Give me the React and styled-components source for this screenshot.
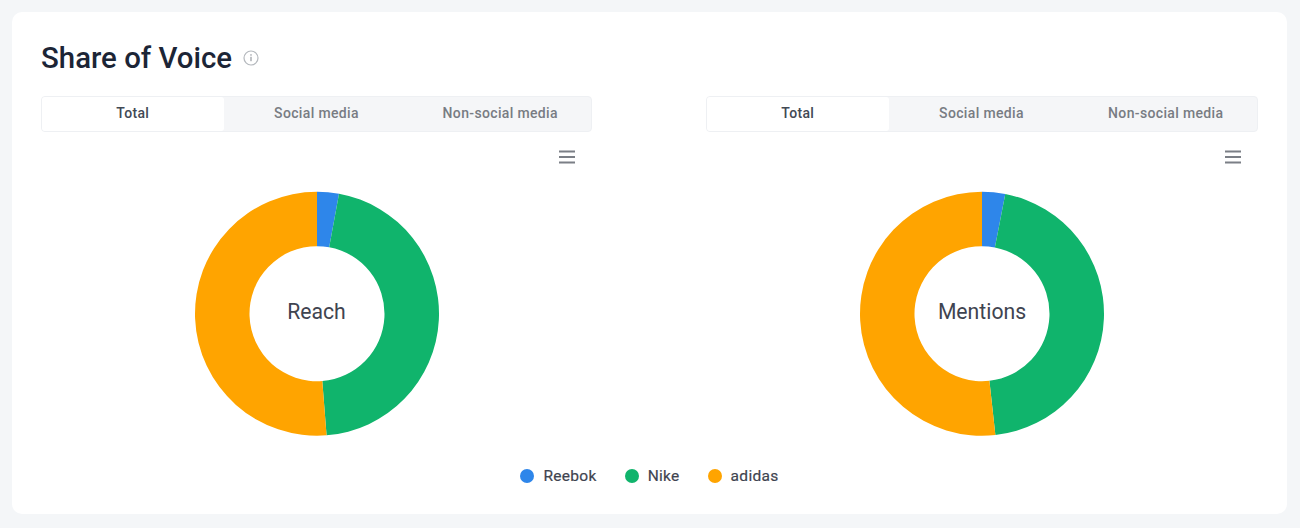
import React from "react";
import styled, { createGlobalStyle } from "styled-components";

const Global = createGlobalStyle`
  html, body { margin: 0; padding: 0; background: #f4f6f8; }
  body { font-family: Roboto, "Liberation Sans", sans-serif; }
`;

const Page = styled.div`
  width: 1300px;
  height: 528px;
  box-sizing: border-box;
  padding: 12px 13px 14px 12px;
  overflow: hidden;
`;

const Card = styled.section`
  height: 100%;
  box-sizing: border-box;
  background: #fff;
  border-radius: 10px;
  padding: 26px 29px 0;
`;

const Header = styled.header`
  display: flex;
  align-items: center;
  gap: 11px;
  height: 40px;
  margin-bottom: 18px;
`;

const Title = styled.h2`
  margin: 0;
  font-size: 29.4px;
  line-height: 41px;
  font-weight: 500;
  color: #1c2536;
`;

const Columns = styled.div`
  display: grid;
  grid-template-columns: 551px 552px;
  column-gap: 114px;
`;

const Column = styled.div`
  display: flex;
  flex-direction: column;
`;

const Tabs = styled.div`
  display: grid;
  grid-template-columns: 181.5px 186px 1fr;
  height: 36px;
  box-sizing: border-box;
  background: #f5f6f8;
  border: 1px solid #eef0f3;
  border-radius: 4px;
`;

const Tab = styled.div`
  display: flex;
  align-items: center;
  justify-content: center;
  padding-bottom: 2px;
  font-size: 14px;
  font-weight: 500;
  letter-spacing: 0.35px;
  color: ${(p) => (p.$active ? "#424955" : "#787c83")};
  background: ${(p) => (p.$active ? "#fff" : "transparent")};
  border-radius: ${(p) => (p.$active ? "3px" : "0")};
`;

const MenuRow = styled.div`
  display: flex;
  justify-content: flex-end;
  padding: 18px 17px 0 0;
  height: 14px;
`;

const Chart = styled.div`
  position: relative;
  width: 246px;
  height: 246px;
  margin: 27px auto 0;
`;

const CenterLabel = styled.div`
  position: absolute;
  inset: 0;
  display: flex;
  align-items: center;
  justify-content: center;
  padding-bottom: 5px;
  font-size: 21.2px;
  color: #3f4450;
`;

const Legend = styled.div`
  display: flex;
  justify-content: center;
  gap: 28px;
  margin-top: 29px;
`;

const LegendItem = styled.div`
  display: flex;
  align-items: center;
  gap: 9px;
  font-size: 15.5px;
  line-height: 20px;
  font-weight: 400;
  letter-spacing: 0.3px;
  -webkit-text-stroke: 0.2px #3f4450;
  color: #3f4450;
`;

const Dot = styled.span`
  width: 14px;
  height: 14px;
  border-radius: 50%;
  background: ${(p) => p.$color};
`;

const BLUE = "#2e86ea";
const GREEN = "#10b46c";
const ORANGE = "#ffa400";

const InfoIcon = () => (
  <svg width="16" height="16" viewBox="0 0 16 16" fill="none" aria-hidden="true">
    <circle cx="8" cy="8" r="7" stroke="#b4b8bd" strokeWidth="1.2" />
    <rect x="7.3" y="6.8" width="1.4" height="4.4" fill="#a4a8ae" />
    <rect x="7.3" y="4.2" width="1.4" height="1.5" fill="#a4a8ae" />
  </svg>
);

const MenuIcon = () => (
  <svg width="16" height="14" viewBox="0 0 16 14" aria-hidden="true">
    <path d="M0 1.5H16M0 7H16M0 12.5H16" stroke="#7b7f86" strokeWidth="1.8" fill="none" />
  </svg>
);

const point = (deg, r) => {
  const a = (deg * Math.PI) / 180;
  return [123 + r * Math.sin(a), 122.7 - r * Math.cos(a)];
};

const arc = (from, to, R, r) => {
  const [x1, y1] = point(from, R);
  const [x2, y2] = point(to, R);
  const [x3, y3] = point(to, r);
  const [x4, y4] = point(from, r);
  const large = to - from > 180 ? 1 : 0;
  return `M${x1} ${y1}A${R} ${R} 0 ${large} 1 ${x2} ${y2}L${x3} ${y3}A${r} ${r} 0 ${large} 0 ${x4} ${y4}Z`;
};

const Donut = ({ blueEnd, greenEnd }) => (
  <svg width="246" height="246" viewBox="0 0 246 246" aria-hidden="true">
    <path d={arc(0, blueEnd, 122, 67.5)} fill={BLUE} />
    <path d={arc(blueEnd, greenEnd, 122, 67.5)} fill={GREEN} />
    <path d={arc(greenEnd, 360, 122, 67.5)} fill={ORANGE} />
  </svg>
);

const Panel = ({ label, blueEnd, greenEnd }) => (
  <Column>
    <Tabs>
      <Tab $active>Total</Tab>
      <Tab>Social media</Tab>
      <Tab>Non-social media</Tab>
    </Tabs>
    <MenuRow>
      <MenuIcon />
    </MenuRow>
    <Chart>
      <Donut blueEnd={blueEnd} greenEnd={greenEnd} />
      <CenterLabel>{label}</CenterLabel>
    </Chart>
  </Column>
);

export default function App() {
  return (
    <>
      <Global />
      <Page>
        <Card>
          <Header>
            <Title>Share of Voice</Title>
            <InfoIcon />
          </Header>
          <Columns>
            <Panel label="Reach" blueEnd={10.4} greenEnd={175.5} />
            <Panel label="Mentions" blueEnd={11} greenEnd={173.7} />
          </Columns>
          <Legend>
            <LegendItem><Dot $color={BLUE} />Reebok</LegendItem>
            <LegendItem><Dot $color={GREEN} />Nike</LegendItem>
            <LegendItem><Dot $color={ORANGE} />adidas</LegendItem>
          </Legend>
        </Card>
      </Page>
    </>
  );
}
